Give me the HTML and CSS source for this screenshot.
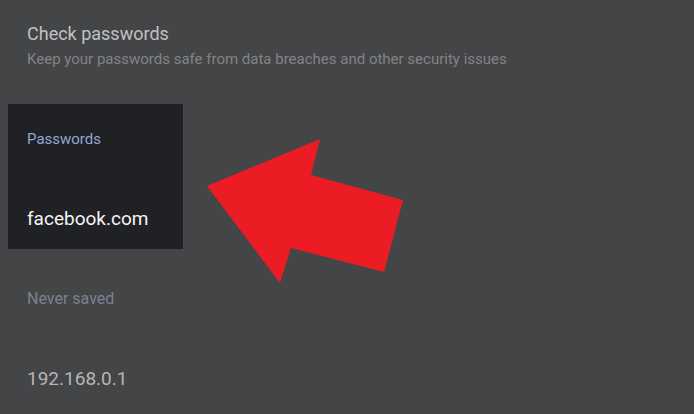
FILE: index.html
```html
<!DOCTYPE html>
<html>
<head>
<meta charset="utf-8">
<link rel="stylesheet" href="styles.css">
</head>
<body>
<div class="page">
  <header class="check">
    <div class="check-title">Check passwords</div>
    <div class="check-sub">Keep your passwords safe from data breaches and other security issues</div>
  </header>
  <section class="saved">
    <div class="saved-label">Passwords</div>
    <div class="saved-site">facebook.com</div>
  </section>
  <section class="never">
    <div class="never-label">Never saved</div>
    <div class="never-site">192.168.0.1</div>
  </section>
  <svg class="arrow" width="694" height="414" viewBox="0 0 694 414">
    <polygon fill="#ec1c24" points="207,186 320,139 311,175 403,200 384,272 291,248 280,283"/>
  </svg>
</div>
</body>
</html>
```
FILE: styles.css
```css
html, body {
  margin: 0;
  padding: 0;
  background: #444547;
}
body {
  font-family: Roboto, "Noto Sans", sans-serif;
  width: 694px;
  height: 414px;
  overflow: hidden;
}
.page {
  position: relative;
  width: 694px;
  height: 414px;
}
.check {
  padding: 23px 0 0 27px;
  display: flex;
  flex-direction: column;
  gap: 5px;
}
.check-title {
  font-size: 18px;
  line-height: 22px;
  color: #c0c1c3;
}
.check-sub {
  font-size: 15px;
  line-height: 18px;
  color: #828386;
}
.saved {
  margin: 36px 0 0 8px;
  width: 175px;
  height: 145px;
  background: #202124;
  box-sizing: border-box;
  padding: 26px 0 0 19px;
  display: flex;
  flex-direction: column;
}
.saved-label {
  font-size: 15px;
  line-height: 18px;
  color: #8ea8d4;
}
.saved-site {
  margin-top: 59px;
  font-size: 19px;
  line-height: 24px;
  color: #f4f4f4;
}
.never {
  padding: 40px 0 0 27px;
  display: flex;
  flex-direction: column;
}
.never-label {
  font-size: 16px;
  line-height: 19px;
  color: #7b8290;
}
.never-site {
  margin-top: 59px;
  font-size: 19px;
  line-height: 24px;
  color: #b4b5b7;
}
.arrow {
  position: absolute;
  left: 0;
  top: 0;
}
```
